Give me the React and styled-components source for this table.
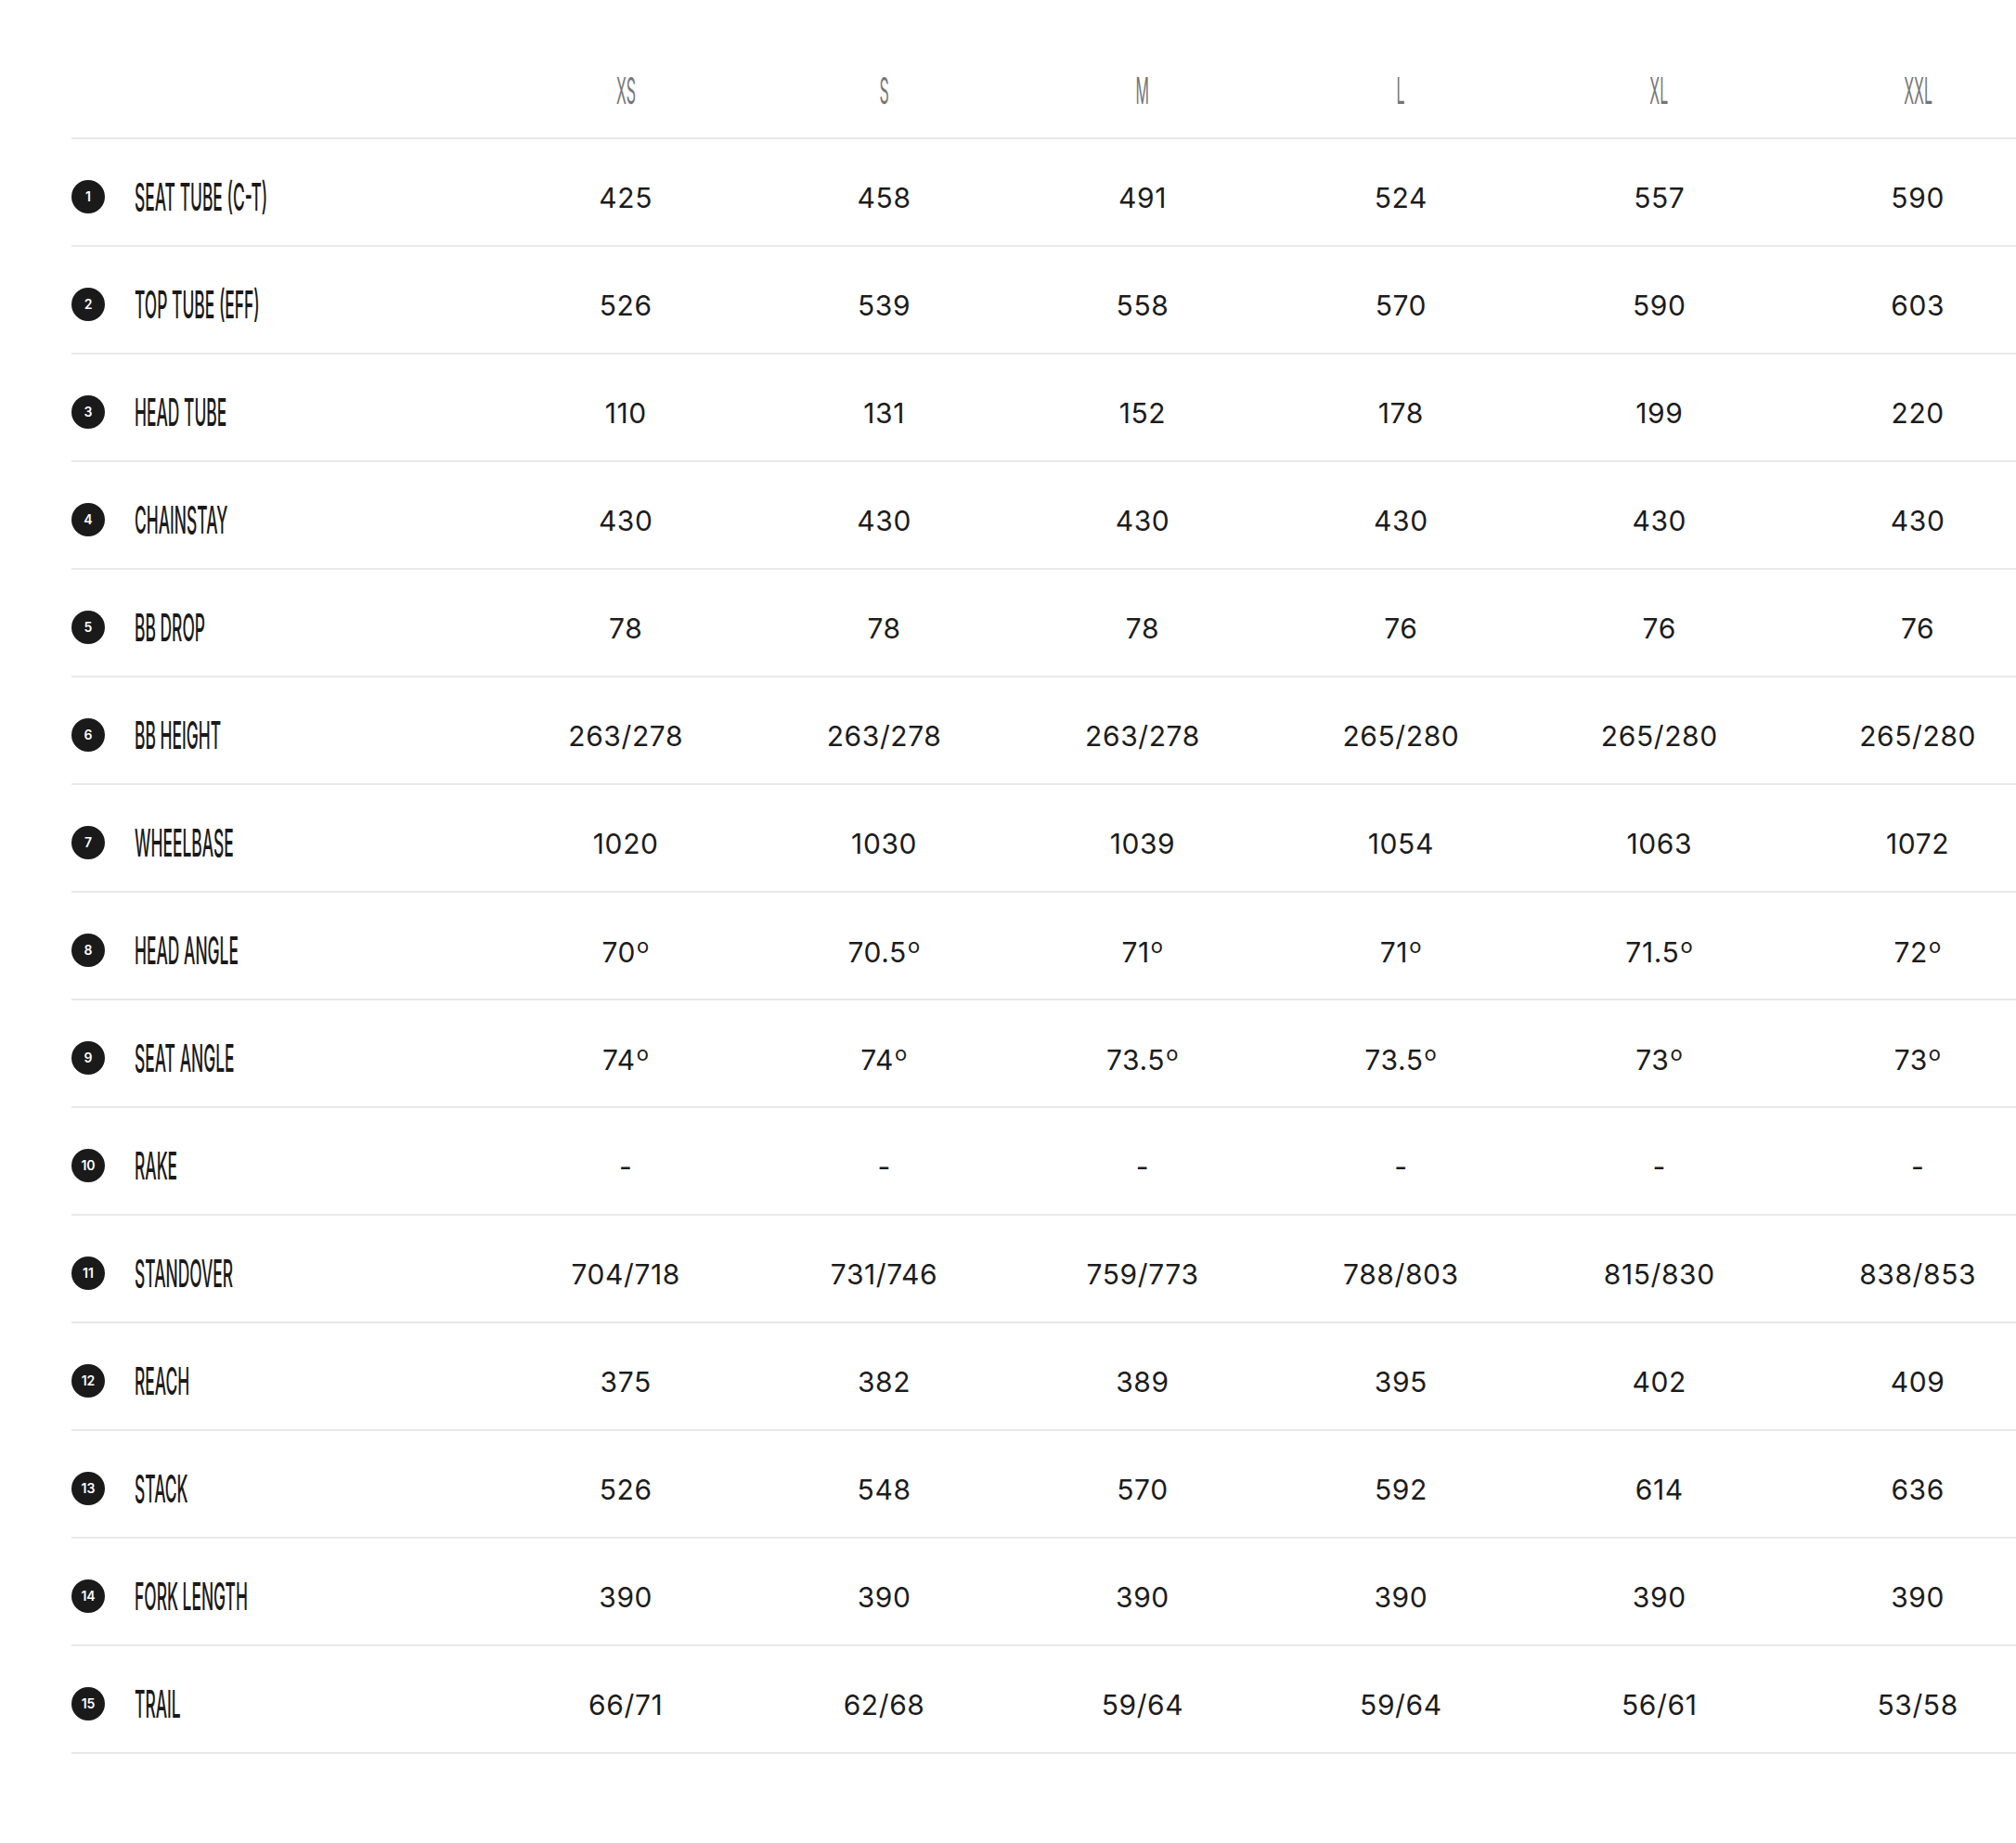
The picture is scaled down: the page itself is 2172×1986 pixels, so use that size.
import React from "react";
import styled, { createGlobalStyle } from "styled-components";

const sizes = ["XS", "S", "M", "L", "XL", "XXL"];

const rows = [
  ["SEAT TUBE (C-T)", ["425", "458", "491", "524", "557", "590"]],
  ["TOP TUBE (EFF)", ["526", "539", "558", "570", "590", "603"]],
  ["HEAD TUBE", ["110", "131", "152", "178", "199", "220"]],
  ["CHAINSTAY", ["430", "430", "430", "430", "430", "430"]],
  ["BB DROP", ["78", "78", "78", "76", "76", "76"]],
  ["BB HEIGHT", ["263/278", "263/278", "263/278", "265/280", "265/280", "265/280"]],
  ["WHEELBASE", ["1020", "1030", "1039", "1054", "1063", "1072"]],
  ["HEAD ANGLE", ["70°", "70.5°", "71°", "71°", "71.5°", "72°"]],
  ["SEAT ANGLE", ["74°", "74°", "73.5°", "73.5°", "73°", "73°"]],
  ["RAKE", ["-", "-", "-", "-", "-", "-"]],
  ["STANDOVER", ["704/718", "731/746", "759/773", "788/803", "815/830", "838/853"]],
  ["REACH", ["375", "382", "389", "395", "402", "409"]],
  ["STACK", ["526", "548", "570", "592", "614", "636"]],
  ["FORK LENGTH", ["390", "390", "390", "390", "390", "390"]],
  ["TRAIL", ["66/71", "62/68", "59/64", "59/64", "56/61", "53/58"]],
];

const GlobalStyle = createGlobalStyle`
  html, body {
    margin: 0;
    padding: 0;
    background: #ffffff;
    overflow-x: hidden;
  }
  body {
    font-family: Inter, "Liberation Sans", sans-serif;
    color: #1c1c1c;
  }
`;

// angles get a bigger ring than the font's own degree sign
const renderValue = (v) => {
  if (!v.endsWith("°")) return v;
  return (
    <>
      {v.slice(0, -1)}
      <Deg>o</Deg>
    </>
  );
};

const App = () => {
  return (
    <>
      <GlobalStyle />
      <Page>
        <Table>
          <HeaderRow>
            <span />
            {sizes.map((size) => (
              <HeaderCell key={size}>
                <Squeeze>{size}</Squeeze>
              </HeaderCell>
            ))}
          </HeaderRow>
          {rows.map(([label, values], i) => (
            <Row key={label}>
              <LabelCell>
                <Badge>{i + 1}</Badge>
                <Label>
                  <Squeeze>{label}</Squeeze>
                </Label>
              </LabelCell>
              {values.map((v, j) => (
                <Value key={j}>{renderValue(v)}</Value>
              ))}
            </Row>
          ))}
        </Table>
      </Page>
    </>
  );
};

const Page = styled.div`
  padding-left: 77px;
  min-height: 1986px;
`;

const Table = styled.div`
  width: 2130px;
`;

const columns = `458px repeat(6, 278.4px)`;

const HeaderRow = styled.div`
  display: grid;
  grid-template-columns: ${columns};
  align-items: center;
  box-sizing: border-box;
  height: 150px;
  padding-top: 46px;
  border-bottom: 2px solid #e9e9e9;
`;

const HeaderCell = styled.div`
  display: flex;
  justify-content: center;
  color: #767676;
  font-family: Inter, "Liberation Sans", sans-serif;
  font-size: 39px;
  font-weight: 400;
  line-height: 1;
`;

const Squeeze = styled.span`
  display: inline-block;
  transform: scaleX(0.41);
  white-space: nowrap;
`;

const Row = styled.div`
  display: grid;
  grid-template-columns: ${columns};
  align-items: center;
  box-sizing: border-box;
  height: 116px;
  padding-top: 11px;
  border-bottom: 2px solid #e9e9e9;
`;

const LabelCell = styled.div`
  display: flex;
  align-items: center;
  gap: 32px;
`;

const Badge = styled.span`
  flex: none;
  width: 36px;
  height: 36px;
  border-radius: 50%;
  background: #1a1a1a;
  color: #ffffff;
  display: flex;
  align-items: center;
  justify-content: center;
  font-family: Inter, "Liberation Sans", sans-serif;
  font-size: 14px;
  font-weight: 600;
  margin-top: -2px;
`;

const Label = styled.span`
  color: #1a1a1a;
  font-family: Inter, "Liberation Sans", sans-serif;
  font-size: 41px;
  font-weight: 500;
  line-height: 1;

  ${Squeeze} {
    transform: scaleX(0.425);
    transform-origin: left center;
  }
`;

const Value = styled.div`
  text-align: center;
  font-family: Inter, "Liberation Sans", sans-serif;
  font-size: 30px;
  font-weight: 420;
  letter-spacing: 0.6px;
  color: #1c1c1c;
  line-height: 1;
`;

const Deg = styled.span`
  display: inline-block;
  font-size: 22px;
  vertical-align: 10px;
  margin-left: 1px;
`;

export default App;
